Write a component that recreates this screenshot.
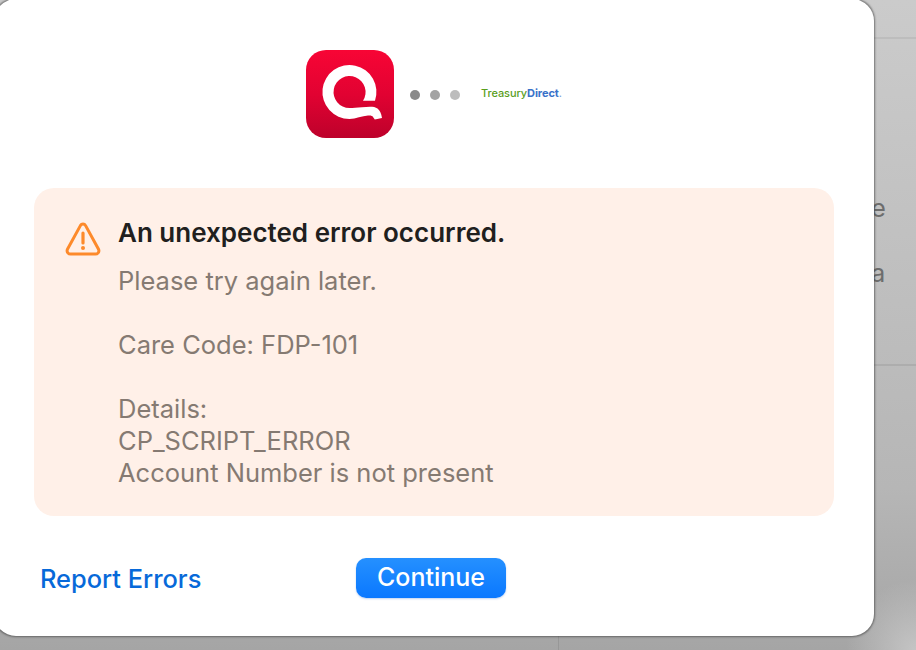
<div class="page">
  <div class="backdrop">
    <div class="bg-head"></div>
    <div class="bg-list">
      <span class="bg-letter first">e</span>
      <span class="bg-letter second">a</span>
    </div>
    <div class="bg-foot"><div class="bg-col"></div></div>
  </div>

  <section class="dialog">
    <header class="logos">
      <svg class="q-app" width="88" height="88" viewBox="0 0 88 88" aria-hidden="true">
        <defs>
          <linearGradient id="qred" x1="0" y1="0" x2="0" y2="1">
            <stop offset="0" stop-color="#f80535" />
            <stop offset="0.5" stop-color="#e20232" />
            <stop offset="1" stop-color="#bd012b" />
          </linearGradient>
        </defs>
        <rect width="88" height="88" rx="20" fill="url(#qred)" />
        <path d="M69 50.7 A27 27 0 1 0 43.5 69 C50 69 56 66 62 65.6 C65 65.4 66.5 66 67 67 L68.8 69.6 L76 68 C75.2 63.5 74 60.5 71.5 58.6 C68 56 62 57 56 57.2 C51 57.6 47 58 43.5 58 A16 16 0 1 1 57 50.7 Z" fill="#fff" />
      </svg>
      <div class="dots">
        <span class="dot d1"></span>
        <span class="dot d2"></span>
        <span class="dot d3"></span>
      </div>
      <div class="td"><span class="td-green">Treasury</span><span class="td-blue">Direct</span><span class="td-dot">.</span></div>
    </header>

    <div class="alert">
      <svg class="warn" width="36" height="34" viewBox="0 0 36 34" fill="none" aria-hidden="true">
        <path d="M15.4 3.6 L2.6 27 C1.3 29.5 2.8 32 5.6 32 L30.4 32 C33.2 32 34.7 29.5 33.4 27 L20.6 3.6 C19.4 1.5 16.6 1.5 15.4 3.6 Z" stroke="#fd8a2b" stroke-width="3" stroke-linejoin="round" />
        <path d="M18 11 V21" stroke="#fd8a2b" stroke-width="3.2" stroke-linecap="round" />
        <circle cx="18" cy="26" r="2" fill="#fd8a2b" />
      </svg>
      <div class="alert-body">
        <h2>An unexpected error occurred.</h2>
        <p>Please try again later.</p>
        <p>Care Code: FDP-101</p>
        <p>Details:<br />CP_SCRIPT_ERROR<br />Account Number is not present</p>
      </div>
    </div>

    <footer class="actions">
      <a class="report" href="#report">Report Errors</a>
      <button class="continue" type="button">Continue</button>
    </footer>
  </section>
</div>

<style>
  :global(body) {
    margin: 0;
    background: #b5b5b5;
  }

  .page {
    position: relative;
    width: 916px;
    height: 650px;
    overflow: hidden;
    font-family: Inter, "Liberation Sans", sans-serif;
    background:
      radial-gradient(circle at 100% 100%, rgba(200, 200, 200, 0.9) 0, rgba(200, 200, 200, 0) 70px),
      linear-gradient(180deg, #cbcbcb 0%, #bdbdbd 50%, #b6b6b6 75%, #a5a5a5 100%);
  }

  .backdrop {
    display: flex;
    flex-direction: column;
    height: 100%;
  }

  .bg-head {
    height: 39px;
    border-bottom: 2px solid #bdbdbd;
    box-sizing: border-box;
  }

  .bg-list {
    height: 327px;
    box-sizing: border-box;
    border-bottom: 2px solid #adadad;
    display: flex;
    flex-direction: column;
    padding-left: 871px;
    font-size: 25.5px;
    line-height: 32px;
    color: #6d6d6d;
  }

  .bg-letter.first {
    margin-top: 153px;
  }

  .bg-letter.second {
    margin-top: 33px;
  }

  .bg-foot {
    flex: 1;
    padding-left: 558px;
  }

  .bg-col {
    width: 1px;
    height: 100%;
    background: #979797;
  }

  .dialog {
    position: absolute;
    left: -6px;
    top: -1px;
    width: 880px;
    height: 637px;
    box-sizing: border-box;
    background: #fff;
    border-radius: 22px;
    box-shadow: 0 0 2px 0.5px rgba(60, 60, 60, 0.6);
    padding: 51px 40px 0;
    display: flex;
    flex-direction: column;
  }

  .logos {
    display: flex;
    align-items: center;
    padding-left: 272px;
    height: 88px;
  }

  .q-app {
    display: block;
    flex: none;
  }

  .dots {
    display: flex;
    gap: 10px;
    margin-left: 16px;
    margin-top: 2px;
  }

  .dot {
    width: 10px;
    height: 10px;
    border-radius: 50%;
  }

  .d1 { background: #8a8a8a; }
  .d2 { background: #a3a3a3; }
  .d3 { background: #bdbdbd; }

  .td {
    margin-left: 21px;
    margin-bottom: 2px;
    font-family: Inter, sans-serif;
    font-size: 11px;
    letter-spacing: -0.08px;
    line-height: 14px;
    white-space: nowrap;
  }

  .td-green { color: #5a9e1c; font-weight: 500; }
  .td-blue { color: #3a72c9; font-weight: 700; }
  .td-dot { color: #7a9fd8; }

  .alert {
    margin-top: 50px;
    height: 328px;
    box-sizing: border-box;
    background: #fff0e8;
    border-radius: 20px;
    padding: 29px 0 0 31px;
    display: flex;
    gap: 17px;
  }

  .warn {
    flex: none;
    margin-top: 5px;
  }

  .alert-body {
    color: #857a72;
    font-size: 25.5px;
    line-height: 32px;
  }

  h2 {
    margin: 0 0 16px;
    font-size: 26px;
    line-height: 32px;
    font-weight: 600;
    color: #211f1e;
  }

  p {
    margin: 0 0 32px;
  }

  p:last-child {
    margin-bottom: 0;
  }

  .actions {
    margin-top: 42px;
    display: flex;
    align-items: center;
    height: 40px;
  }

  .report {
    margin-left: 6px;
    margin-top: 1px;
    width: 161px;
    white-space: nowrap;
    font-size: 25.4px;
    font-weight: 450;
    color: #0769d9;
    text-decoration: none;
  }

  .continue {
    margin-left: 155px;
    width: 150px;
    height: 40px;
    border: 0;
    border-radius: 10px;
    background: linear-gradient(#2590ff, #0a78ff);
    color: #fff;
    font-family: inherit;
    font-size: 25px;
    font-weight: 450;
    line-height: 36px;
    padding: 0 0 2px;
    box-shadow: 0 1px 2px rgba(0, 80, 200, 0.25);
  }
</style>
